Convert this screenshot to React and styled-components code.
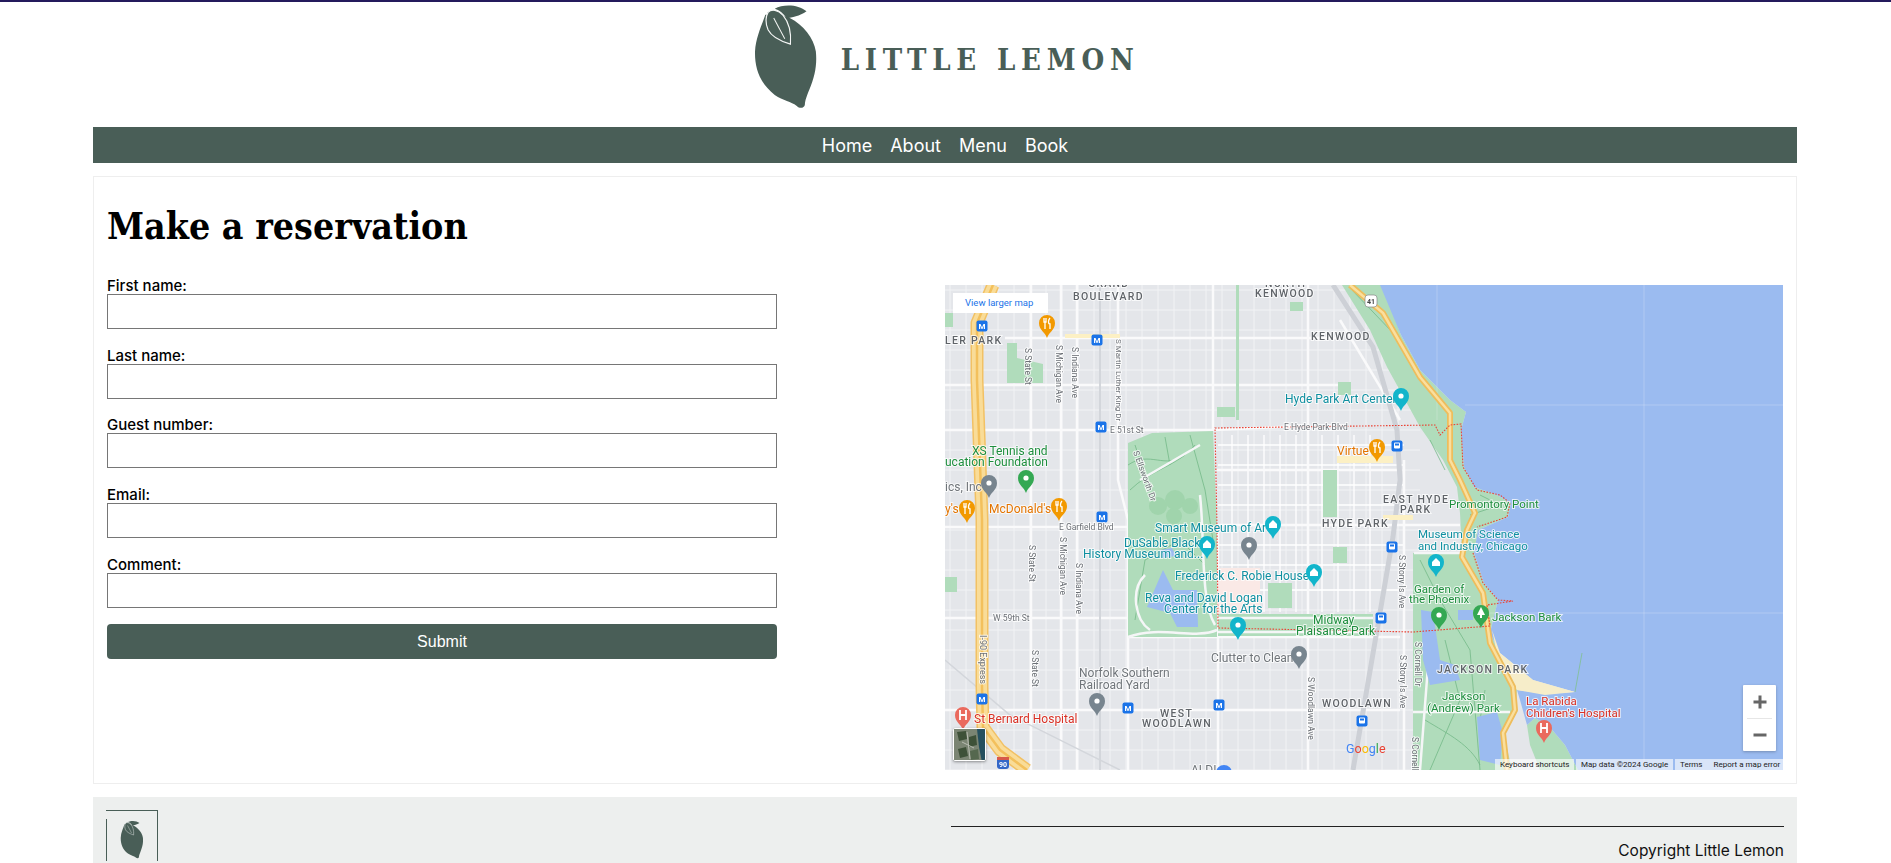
import React from "react";
import styled, { createGlobalStyle } from "styled-components";

const GREEN = "#495e57";

const GlobalStyle = createGlobalStyle`
  html, body {
    margin: 0;
    height: 100%;
    overflow: hidden;
    background: #fff;
    font-family: Inter, "Liberation Sans", sans-serif;
  }
  * { box-sizing: border-box; }
`;

const Page = styled.div`
  border-top: 2px solid #241a5c;
  padding: 0 94px 0 93px;
`;

const Header = styled.header`
  height: 125px;
  display: flex;
  justify-content: center;
  padding-top: 1px;
`;

const Brand = styled.div`
  display: flex;
  align-items: flex-start;
  gap: 22px;
  margin-left: 3px;
`;

const BrandName = styled.span`
  font-family: "DejaVu Serif Condensed", "DejaVu Serif", serif;
  font-weight: 700;
  font-size: 29px;
  line-height: 32px;
  letter-spacing: 5.8px;
  color: ${GREEN};
  margin-top: 41px;
  white-space: nowrap;
`;

const Nav = styled.nav`
  height: 36px;
  background: ${GREEN};
  display: flex;
  justify-content: center;
  align-items: center;
  gap: 18px;
  margin-bottom: 13px;
`;

const NavLink = styled.a`
  color: #fff;
  font-size: 18px;
  text-decoration: none;
`;

const Main = styled.main`
  border: 1px solid #eeeeee;
  padding: 13px;
  display: grid;
  grid-template-columns: 670px 838px;
  justify-content: space-between;
  margin-bottom: 13px;
`;

const Title = styled.h1`
  font-family: "DejaVu Serif Condensed", "DejaVu Serif", serif;
  font-weight: 700;
  font-size: 37.2px;
  line-height: 72px;
  margin: 0 0 16px;
  color: #000;
`;

const Form = styled.form`
  display: flex;
  flex-direction: column;
`;

const Field = styled.div`
  display: flex;
  flex-direction: column;
  margin-bottom: 18.7px;
`;

const Label = styled.label`
  font-size: 15px;
  font-weight: 500;
  line-height: 16px;
  color: #000;
`;

const Input = styled.input`
  height: 35px;
  border: 1px solid #767676;
  background: #fff;
  padding: 0 4px;
`;

const Submit = styled.button`
  height: 35px;
  margin-top: -2px;
  border: 0;
  border-radius: 4px;
  background: ${GREEN};
  color: #fff;
  font-family: "Liberation Sans", sans-serif;
  font-size: 16px;
`;

const MapColumn = styled.div`
  padding-top: 95px;
`;

const MapFrame = styled.div`
  position: relative;
  height: 485px;
  overflow: hidden;
  background: #e4e6ea;
`;

const MapSvg = styled.svg`
  display: block;
  width: 838px;
  height: 485px;
  filter: blur(0.3px);
`;

const LargerMap = styled.a`
  position: absolute;
  left: 8px;
  top: 8px;
  width: 95px;
  height: 20px;
  background: #fff;
  color: #1a73e8;
  font-family: Roboto, sans-serif;
  font-size: 9.5px;
  line-height: 20px;
  padding-left: 12px;
`;

const Thumb = styled.div`
  position: absolute;
  left: 8px;
  bottom: 9px;
  width: 33px;
  height: 33px;
  border: 1px solid #fff;
  border-radius: 2px;
  box-shadow: 0 1px 3px rgba(0, 0, 0, 0.4);
  overflow: hidden;
  background: #4f5f4c;
`;

const ZoomBox = styled.div`
  position: absolute;
  right: 7px;
  bottom: 19px;
  width: 33px;
  height: 66px;
  background: #fff;
  border-radius: 1px;
  box-shadow: 0 1px 3px rgba(0, 0, 0, 0.25);
  display: flex;
  flex-direction: column;
`;

const ZoomButton = styled.div`
  flex: 1;
  display: flex;
  align-items: center;
  justify-content: center;
  position: relative;
  & + &::before {
    content: "";
    position: absolute;
    top: 0;
    left: 4px;
    right: 4px;
    height: 1px;
    background: #e6e6e6;
  }
`;

const Attribution = styled.div`
  position: absolute;
  right: 0;
  bottom: 0;
  height: 11px;
  display: flex;
  gap: 2px;
  font-family: Roboto, sans-serif;
  font-size: 8px;
  line-height: 11px;
  color: #222;
  white-space: nowrap;
`;

const AttrGroup = styled.div`
  width: ${(p) => p.$w}px;
  padding-left: 5px;
  background: rgba(255, 255, 255, 0.62);
  display: flex;
  gap: 11px;
`;

const Footer = styled.footer`
  height: 66px;
  background: #edefee;
  padding: 13px 13px 0 13px;
  display: flex;
  justify-content: space-between;
`;

const BrokenLogo = styled.div`
  position: relative;
  width: 52px;
  height: 51px;
  border-top: 1px solid ${GREEN};
  border-right: 1px solid ${GREEN};
  display: flex;
  justify-content: center;
  padding-top: 9px;
  &::before {
    content: "";
    position: absolute;
    left: 0;
    top: 8px;
    bottom: 0;
    width: 1px;
    background: ${GREEN};
  }
`;

const FooterRight = styled.div`
  width: 833px;
  padding-top: 16px;
  display: flex;
  flex-direction: column;
`;

const Rule = styled.hr`
  margin: 0;
  border: 0;
  border-top: 1px solid #222;
`;

const Copyright = styled.p`
  margin: 14px 0 0;
  text-align: right;
  font-size: 15.5px;
  line-height: 20px;
  color: #111;
`;

const LABEL_COLORS = {
  teal: "#0f8fa0",
  green: "#1e8e3e",
  orange: "#e37400",
  red: "#d93025",
  gray: "#70757a",
  road: "#6b6f75",
  area: "#5f6368",
};

const MapText = styled.text`
  font-family: Roboto, sans-serif;
  font-size: ${(p) => p.$size || 12}px;
  fill: ${(p) => LABEL_COLORS[p.$kind]};
  letter-spacing: ${(p) => (p.$kind === "area" ? "1.3px" : "0")};
  font-weight: ${(p) => (p.$kind === "area" ? 500 : 400)};
  stroke: rgba(255, 255, 255, 0.75);
  stroke-width: 2px;
  paint-order: stroke;
`;

const ShieldText = styled.text`
  font-family: Roboto, sans-serif;
  font-size: ${(p) => p.$size}px;
  font-weight: 700;
  fill: ${(p) => p.$color};
  text-anchor: middle;
`;

const labels = [
  [1088, 287, "GRAND", "area", 10.5],
  [1073, 300, "BOULEVARD", "area", 10.5],
  [1265, 287, "NORTH", "area", 10.5],
  [1255, 297, "KENWOOD", "area", 10.5],
  [1311, 340, "KENWOOD", "area", 10.5],
  [945, 344, "LER PARK", "area", 10.5],
  [1285, 403, "Hyde Park Art Center", "teal", 12],
  [1337, 455, "Virtue", "orange", 12],
  [972, 455, "XS Tennis and", "green", 12],
  [945, 466, "ucation Foundation", "green", 12],
  [945, 491, "ics, Inc", "gray", 12],
  [945, 513, "y's", "orange", 12],
  [989, 513, "McDonald's", "orange", 12],
  [1059, 530, "E Garfield Blvd", "road", 8.5],
  [1155, 532, "Smart Museum of Art", "teal", 12],
  [1322, 527, "HYDE PARK", "area", 10.5],
  [1383, 503, "EAST HYDE", "area", 10.5],
  [1400, 513, "PARK", "area", 10.5],
  [1449, 508, "Promontory Point", "green", 11.5],
  [1418, 538, "Museum of Science", "teal", 11.5],
  [1418, 550, "and Industry, Chicago", "teal", 11.5],
  [1414, 593, "Garden of", "green", 11.5],
  [1409, 603, "the Phoenix", "green", 11.5],
  [1492, 621, "Jackson Bark", "green", 11.5],
  [1437, 673, "JACKSON PARK", "area", 10.5],
  [1442, 700, "Jackson", "green", 11.5],
  [1427, 712, "(Andrew) Park", "green", 11.5],
  [1526, 705, "La Rabida", "red", 11.5],
  [1526, 717, "Children's Hospital", "red", 11.5],
  [1124, 547, "DuSable Black", "teal", 12],
  [1083, 558, "History Museum and...", "teal", 12],
  [1175, 580, "Frederick C. Robie House", "teal", 12],
  [1145, 602, "Reva and David Logan", "teal", 12],
  [1164, 613, "Center for the Arts", "teal", 12],
  [1313, 624, "Midway", "green", 12],
  [1296, 635, "Plaisance Park", "green", 12],
  [993, 621, "W 59th St", "road", 8.5],
  [1211, 662, "Clutter to Clean", "gray", 12],
  [1079, 677, "Norfolk Southern", "gray", 12],
  [1079, 689, "Railroad Yard", "gray", 12],
  [974, 723, "St Bernard Hospital", "red", 12],
  [1160, 717, "WEST", "area", 10.5],
  [1142, 727, "WOODLAWN", "area", 10.5],
  [1322, 707, "WOODLAWN", "area", 10.5],
  [1110, 433, "E 51st St", "road", 8.5],
  [1284, 430, "E Hyde Park Blvd", "road", 8.5],
  [1191, 774, "ALDI", "gray", 12],
];

// vertical street names: x, top y, text, size
const sideLabels = [
  [1025, 348, "S State St", 8.5],
  [1029, 545, "S State St", 8.5],
  [1032, 650, "S State St", 8.5],
  [1056, 345, "S Michigan Ave", 8.5],
  [1060, 537, "S Michigan Ave", 8.5],
  [1072, 347, "S Indiana Ave", 8.5],
  [1076, 563, "S Indiana Ave", 8.5],
  [1116, 339, "S Martin Luther King Dr", 8],
  [980, 635, "I-90 Express", 9],
  [1399, 555, "S Stony Is Ave", 8.5],
  [1400, 655, "S Stony Is Ave", 8.5],
  [1308, 677, "S Woodlawn Ave", 8.5],
  [1415, 642, "S Cornell Dr", 8.5],
  [1412, 737, "S Cornell", 8.5],
];

const pins = [
  [1047, 338, "#f29900", "fork"],
  [1377, 462, "#f29900", "fork"],
  [1059, 521, "#f29900", "fork"],
  [967, 523, "#f29900", "fork"],
  [1401, 411, "#12b5cb", "dot"],
  [989, 498, "#78858f", "dot"],
  [1026, 493, "#34a853", "dot"],
  [1273, 539, "#12b5cb", "house"],
  [1207, 559, "#12b5cb", "house"],
  [1249, 560, "#78858f", "dot"],
  [1314, 587, "#12b5cb", "house"],
  [1238, 640, "#12b5cb", "dot"],
  [1299, 669, "#78858f", "dot"],
  [1097, 716, "#78858f", "dot"],
  [963, 730, "#ea6a5e", "h"],
  [1436, 577, "#12b5cb", "house"],
  [1439, 630, "#34a853", "dot"],
  [1481, 628, "#34a853", "tree"],
  [1544, 743, "#ea6a5e", "h"],
  [1224, 788, "#4285f4", "dot"],
];

const metroStops = [
  [982, 326], [1097, 340], [1101, 427], [1102, 517], [982, 699], [1128, 708], [1219, 705],
];
const busStops = [[1397, 446], [1392, 547], [1381, 618], [1362, 721]];

const minorX = Array.from({ length: 29 }, (_, i) => 950 + i * 16);
const minorY = Array.from({ length: 25 }, (_, i) => 290 + i * 20);
const hydeX = [1232, 1248, 1264, 1280, 1296, 1322, 1338, 1354, 1370];
const hydeY = [445, 465, 485, 505, 545, 565, 590];

const majorStreets = [
  "M1031 285V770", "M1061 285V770", "M1077 285V770", "M1118 285V480L1128 520V770",
  "M1213 285V430", "M1218 525V770", "M1308 285V770", "M1404 460V770",
  "M1005 338H1340", "M945 430H1213L1300 426", "M945 527H1130", "M1217 525H1460",
  "M945 618H1130", "M945 710H1400", "M1128 637H1400", "M945 385H1340",
  "M1217 470H1400", "M1340 320L1400 420",
];

const parks = [
  "1128,443 1152,433 1213,431 1217,525 1217,637 1128,637",
  "1342,285 1383,285 1401,335 1420,370 1450,400 1466,412 1461,430 1464,467 1474,487 1497,495 1511,503 1508,517 1478,530 1474,553 1484,583 1498,600 1490,633 1500,653 1517,690 1516,710 1504,735 1512,770 1413,770 1413,553 1462,553 1460,513 1457,487 1443,460 1420,427 1387,367 1370,330",
  "1527,725 1535,718 1548,725 1565,745 1578,770 1540,770 1530,745",
  "1218,614 1373,614 1373,636 1218,636",
  "1007,343 1017,343 1017,358 1043,364 1043,383 1007,383",
  "945,313 953,313 953,327 945,327",
  "945,577 957,577 957,592 945,592",
  "1338,382 1351,382 1351,395 1338,395",
  "1217,407 1235,407 1235,417 1217,417",
  "1323,470 1337,470 1337,517 1323,517",
  "1268,583 1292,583 1292,608 1268,608",
  "1333,547 1347,547 1347,563 1333,563",
  "1290,302 1303,302 1303,311 1290,311",
  "1236,285 1239,285 1239,420 1236,420",
];

const lakes = [
  "1147,607 1163,570 1173,590 1197,590 1198,627 1177,627 1170,613",
  "1160,550 1172,548 1176,556 1162,558",
  "1421,610 1433,612 1440,660 1455,665 1460,680 1430,685 1423,660",
  "1477,717 1497,712 1503,733 1500,765 1480,760",
  "1458,610 1473,610 1473,620 1458,620",
];

const HIGHWAY = "M993 285L977 323V380L982 520V687L983 727L1000 750L1027 770";
const SHORE_DRIVE =
  "M1350 285L1383 313L1420 377L1450 413V460L1460 480L1475 513L1467 530L1462 557L1483 593L1490 643L1513 687L1515 710L1503 733L1507 770";

const Pin = ({ x, y, color, glyph }) => (
  <g transform={`translate(${x} ${y})`}>
    <path d="M0 0C-2-6-8-8-8-15A8 8 0 1 1 8-15C8-8 2-6 0 0Z" fill={color} />
    {glyph === "fork" && (
      <path d="M-3-20V-16H-1V-20M-2-16V-9M3-20C1-18 1-14 3-14V-9" fill="none" stroke="#fff" strokeWidth="1.3" />
    )}
    {glyph === "dot" && <circle cy="-15" r="2.6" fill="#fff" />}
    {glyph === "house" && <path d="M-4-15L0-19L4-15V-11H-4Z" fill="#fff" />}
    {glyph === "tree" && <path d="M0-21L4-13H1V-10H-1V-13H-4Z" fill="#fff" />}
    {glyph === "h" && (
      <path d="M-3-20V-10M3-20V-10M-3-15H3" fill="none" stroke="#fff" strokeWidth="1.8" />
    )}
  </g>
);

const CityMap = () => (
  <MapSvg viewBox="945 285 838 485" aria-label="Map of Hyde Park, Chicago">
    <rect x="945" y="285" width="838" height="485" fill="#e4e6ea" />
    <g stroke="#f2f3f5" strokeWidth="1">
      {minorX.map((x) => <path key={x} d={`M${x} 285V770`} />)}
      {minorY.map((y) => <path key={y} d={`M945 ${y}H1420`} />)}
    </g>
    <g stroke="#fff" strokeWidth="1.3">
      {hydeX.map((x) => <path key={x} d={`M${x} 435V612`} />)}
      {hydeY.map((y) => <path key={y} d={`M1218 ${y}H1404`} />)}
    </g>
    <g stroke="#fafafb" strokeWidth="2.5" fill="none">
      {majorStreets.map((d) => <path key={d} d={d} />)}
    </g>
    <path d="M1100 285V770" stroke="#d3d6db" strokeWidth="2" />
    <path d="M945 660L1010 715L1120 770" stroke="#d3d6db" strokeWidth="1.5" fill="none" />
    <path d="M1333 285L1373 347L1397 430L1400 480L1393 537L1353 770" stroke="#cdd0d6" strokeWidth="5" fill="none" />
    <g fill="#b0dcbb">
      {parks.map((p) => <polygon key={p} points={p} />)}
    </g>
    <polygon points="1218,568 1260,568 1260,613 1218,613" fill="#fae9e6" />
    <g fill="#fcf0c4">
      <rect x="1337" y="456" width="56" height="7" />
      <rect x="1065" y="334" width="55" height="4" />
      <rect x="1383" y="515" width="30" height="5" />
    </g>
    <g stroke="#74b988" strokeWidth="0.8" fill="none">
      <path d="M1130 490C1150 470 1180 465 1195 445M1190 435L1205 490L1213 540" />
      <path d="M1128 465C1150 450 1165 470 1185 455M1135 445L1150 490M1165 437L1170 465" />
      <path d="M1135 620L1145 560L1180 540L1205 565M1420 560L1440 600L1470 650L1480 770" />
      <path d="M1430 440L1445 470M1445 640L1460 700L1430 770M1425 720C1450 735 1470 745 1480 765" />
      <path d="M1352 290L1395 335L1440 405M1470 515L1500 505L1480 495M1485 690L1480 720" />
    </g>
    <g fill="#a0d4ac">
      <circle cx="1158" cy="506" r="9" />
      <circle cx="1175" cy="500" r="10" />
      <circle cx="1190" cy="506" r="8" />
      <circle cx="1174" cy="516" r="8" />
    </g>
    <g stroke="#f5f6f7" strokeWidth="2.5" fill="none">
      <path d="M1218 618H1300L1373 618M1218 632H1373" />
      <path d="M1414 553H1462M1413 712H1510M1430 640L1420 770" />
      <path d="M1128 637C1160 625 1195 640 1217 630" />
      <path d="M1145 575C1130 590 1135 620 1150 630M1200 495C1205 540 1200 600 1215 625M1140 480L1200 445" />
    </g>
    <polygon
      points="1380,285 1783,285 1783,770 1578,770 1565,745 1548,725 1535,718 1527,725 1520,700 1517,690 1545,694 1575,692 1533,680 1500,653 1490,633 1498,600 1484,583 1474,553 1478,530 1508,517 1511,503 1497,495 1474,487 1464,467 1461,430 1466,412 1450,400 1420,370 1401,335"
      fill="#9bbbf0"
    />
    <polygon points="1492,630 1500,653 1533,680 1575,692 1545,695 1517,690 1500,668" fill="#f6edc9" />
    <path d="M1575 692L1582 653" stroke="#7fc08f" strokeWidth="0.8" />
    <g fill="#9bbbf0">
      {lakes.map((p) => <polygon key={p} points={p} />)}
    </g>
    <g stroke="#fff" strokeOpacity="0.22" fill="none">
      <path d="M1437 285V420M1644 285V770M1465 405H1783M1490 613H1783" />
    </g>
    <g fill="none" strokeLinejoin="round">
      <path d={HIGHWAY} stroke="#f2c164" strokeWidth="13" />
      <path d={HIGHWAY} stroke="#f9dc98" strokeWidth="10" />
      <path d={HIGHWAY} stroke="#f3c05c" strokeWidth="2.5" />
      <path d={SHORE_DRIVE} stroke="#eebd5c" strokeWidth="6" />
      <path d={SHORE_DRIVE} stroke="#fadf9e" strokeWidth="2.5" />
    </g>
    <path
      d="M1217 527L1215 428L1435 425L1440 435L1450 425L1461 424L1463 467L1477 490L1500 495L1510 503L1507 517L1477 527M1473 553L1483 583L1498 600L1513 601L1487 605L1490 626L1413 632L1218 628L1217 527"
      fill="none"
      stroke="#ea4335"
      strokeWidth="1.1"
      strokeDasharray="1.6 1.4"
    />
    {metroStops.map(([x, y]) => (
      <g key={`${x}-${y}`}>
        <rect x={x - 5.5} y={y - 5.5} width="11" height="11" rx="2" fill="#1a73e8" />
        <ShieldText x={x} y={y + 3} $size={8} $color="#fff">M</ShieldText>
      </g>
    ))}
    {busStops.map(([x, y]) => (
      <g key={`${x}-${y}`}>
        <rect x={x - 5.5} y={y - 5.5} width="11" height="11" rx="2" fill="#1a73e8" />
        <rect x={x - 3} y={y - 3.5} width="6" height="6" rx="1" fill="#fff" />
        <rect x={x - 2} y={y - 2.5} width="4" height="2" fill="#1a73e8" />
      </g>
    ))}
    <rect x="1365" y="295" width="12" height="12" rx="3" fill="#fff" stroke="#888" strokeWidth="0.7" />
    <ShieldText x="1371" y="304" $size={7} $color="#444">41</ShieldText>
    <rect x="997" y="757" width="12" height="12" rx="3" fill="#3367c8" />
    <rect x="997" y="757" width="12" height="3" fill="#d75a4a" />
    <ShieldText x="1003" y="767" $size={7} $color="#fff">90</ShieldText>
    {labels.map(([x, y, text, kind, size]) => (
      <MapText key={`${x}-${y}`} x={x} y={y} $kind={kind} $size={size}>{text}</MapText>
    ))}
    {sideLabels.map(([x, y, text, size]) => (
      <MapText key={`${x}-${y}`} x={x} y={y} $kind="road" $size={size} transform={`rotate(90 ${x} ${y})`}>
        {text}
      </MapText>
    ))}
    <MapText x="1133" y="452" $kind="road" $size={8.5} transform="rotate(70 1133 452)">S Ellsworth Dr</MapText>
    {pins.map(([x, y, color, glyph]) => (
      <Pin key={`${x}-${y}`} x={x} y={y} color={color} glyph={glyph} />
    ))}
    <text x="1346" y="753" fontFamily="Roboto, sans-serif" fontSize="12.5" fontWeight="400">
      <tspan fill="#4285f4">G</tspan>
      <tspan fill="#ea4335">o</tspan>
      <tspan fill="#fbbc04">o</tspan>
      <tspan fill="#4285f4">g</tspan>
      <tspan fill="#34a853">l</tspan>
      <tspan fill="#ea4335">e</tspan>
    </text>
  </MapSvg>
);

const Lemon = ({ height }) => (
  <svg viewBox="160 5 195 320" height={height} width={(height * 195) / 320}>
    <path
      d="M197 40C185 75 168 110 166 150C165 200 180 245 225 280C250 297 275 300 290 312C300 322 312 320 315 310C316 295 320 285 328 265C345 225 352 190 348 150C342 110 310 70 270 50L240 40Z"
      fill={GREEN}
    />
    <path d="M225 22C250 8 295 8 320 30C300 45 275 48 262 52C250 35 238 25 225 22Z" fill={GREEN} />
    <path
      d="M205 33C215 22 235 25 250 42C265 60 275 90 272 128C245 120 215 105 205 85C197 65 198 45 205 33Z"
      fill={GREEN}
      stroke="#f4f6f5"
      strokeWidth="3.5"
    />
    <path d="M222 50L255 112" stroke="#f4f6f5" strokeWidth="3" />
  </svg>
);

const fields = ["First name:", "Last name:", "Guest number:", "Email:", "Comment:"];

export default function App() {
  return (
    <Page>
      <GlobalStyle />
      <Header>
        <Brand>
          <Lemon height={107} />
          <BrandName>LITTLE LEMON</BrandName>
        </Brand>
      </Header>
      <Nav>
        <NavLink href="#">Home</NavLink>
        <NavLink href="#">About</NavLink>
        <NavLink href="#">Menu</NavLink>
        <NavLink href="#">Book</NavLink>
      </Nav>
      <Main>
        <div>
          <Title>Make a reservation</Title>
          <Form onSubmit={(e) => e.preventDefault()}>
            {fields.map((name) => (
              <Field key={name}>
                <Label>{name}</Label>
                <Input type="text" />
              </Field>
            ))}
            <Submit type="submit">Submit</Submit>
          </Form>
        </div>
        <MapColumn>
          <MapFrame>
            <CityMap />
            <LargerMap>View larger map</LargerMap>
            <Thumb>
              <svg viewBox="0 0 33 33" width="33" height="33">
                <rect width="33" height="33" fill="#7b8573" />
                <path d="M23 0H33V33H28L25 18Z" fill="#25505f" />
                <path d="M3 3L12 2L13 10L5 12ZM15 8L22 6L23 16L15 18ZM4 20L12 18L14 27L6 29Z" fill="#3e5138" />
                <path d="M16 22L24 20L25 30L17 31Z" fill="#55684f" />
                <path d="M8 13L20 19M13 3L16 30" stroke="#b9bdb2" strokeWidth="1" />
              </svg>
            </Thumb>
            <ZoomBox>
              <ZoomButton>
                <svg width="16" height="16" viewBox="0 0 16 16">
                  <path d="M8 1.5V14.5M1.5 8H14.5" stroke="#666" strokeWidth="3" />
                </svg>
              </ZoomButton>
              <ZoomButton>
                <svg width="16" height="16" viewBox="0 0 16 16">
                  <path d="M1.5 8H14.5" stroke="#666" strokeWidth="3" />
                </svg>
              </ZoomButton>
            </ZoomBox>
            <Attribution>
              <AttrGroup $w={79}>Keyboard shortcuts</AttrGroup>
              <AttrGroup $w={97}>Map data ©2024 Google</AttrGroup>
              <AttrGroup $w={108}>
                <span>Terms</span>
                <span>Report a map error</span>
              </AttrGroup>
            </Attribution>
          </MapFrame>
        </MapColumn>
      </Main>
      <Footer>
        <BrokenLogo>
          <Lemon height={39} />
        </BrokenLogo>
        <FooterRight>
          <Rule />
          <Copyright>Copyright Little Lemon</Copyright>
        </FooterRight>
      </Footer>
    </Page>
  );
}
